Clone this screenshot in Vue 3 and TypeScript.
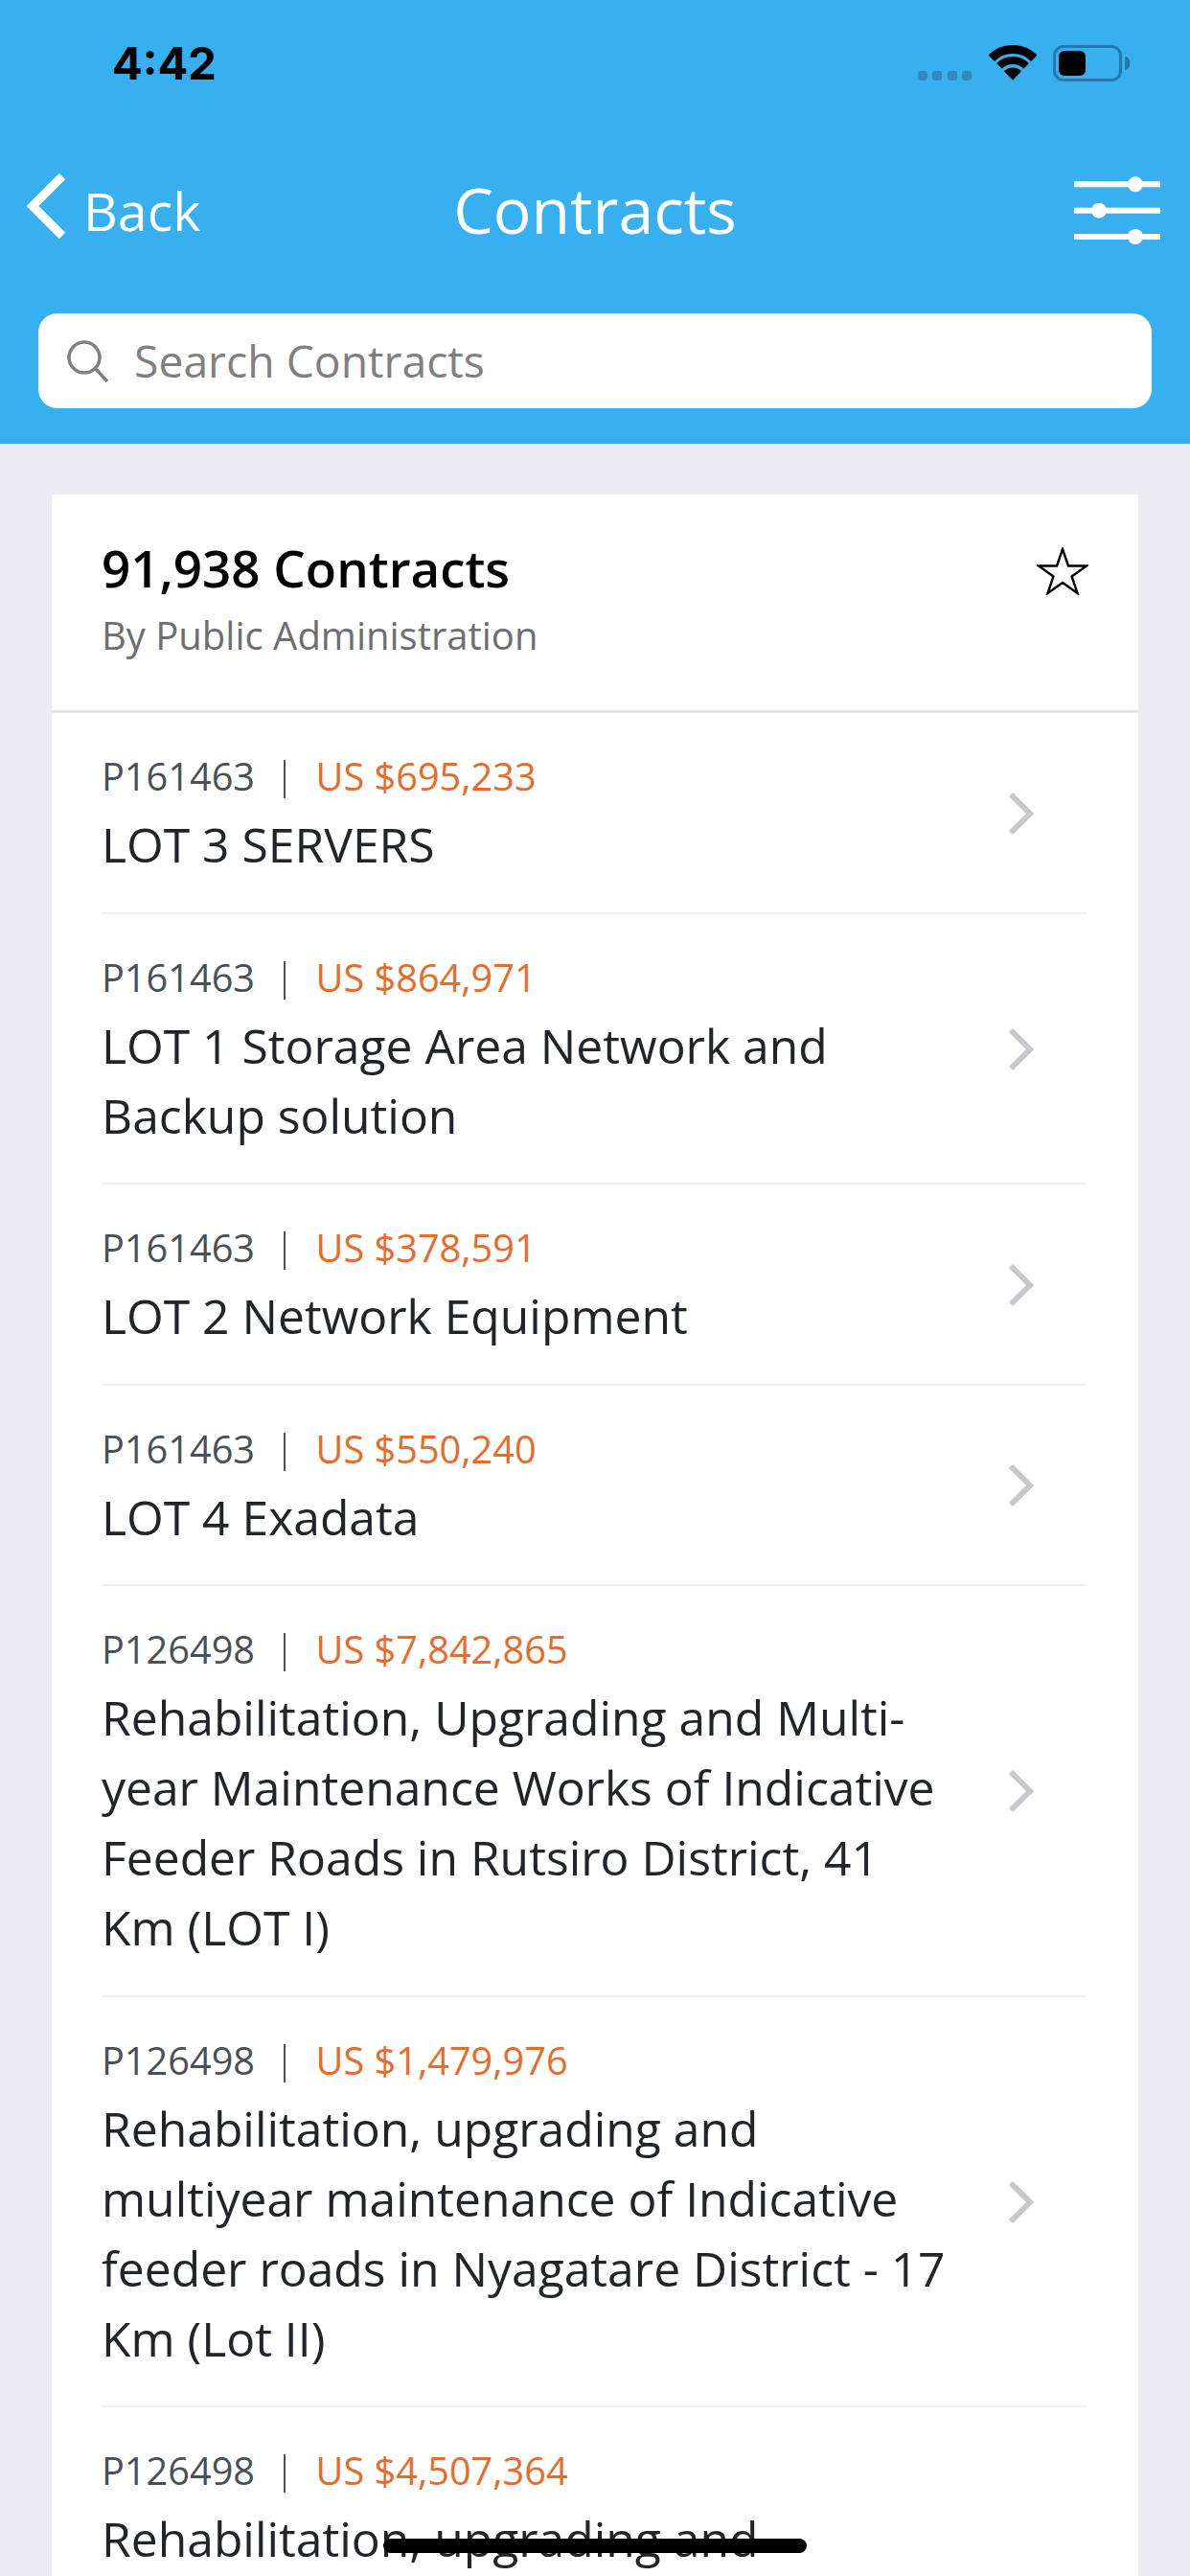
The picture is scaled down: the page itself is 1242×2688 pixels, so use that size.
<template>
  <div class="screen">
    <header class="top">
      <div class="status">
        <span class="time">4:42</span>
        <div class="status-icons">
          <div class="signal">
            <span v-for="n in 4" :key="n" class="signal-dot"></span>
          </div>
          <svg class="wifi" width="50" height="37" viewBox="0 0 50 37">
            <path d="M2.7 13.7A31.5 31.5 0 0 1 47.3 13.7" fill="none" stroke="#000" stroke-width="9" />
            <path d="M10.9 21.9A20 20 0 0 1 39.1 21.9" fill="none" stroke="#000" stroke-width="8" />
            <path d="M25 36.5L15.8 27.3A13 13 0 0 1 34.2 27.3Z" fill="#000" />
          </svg>
          <div class="battery">
            <span class="battery-fill"></span>
          </div>
          <span class="battery-cap"></span>
        </div>
      </div>

      <nav class="nav">
        <div class="back">
          <svg class="back-icon" width="50" height="80" viewBox="0 0 50 80">
            <path d="M39 9L8 40L39 71" fill="none" stroke="#fff" stroke-width="9" />
          </svg>
          <span>Back</span>
        </div>
        <div class="nav-title">Contracts</div>
        <svg class="sliders" width="90" height="72" viewBox="0 0 90 72">
          <g fill="#fff">
            <rect x="0" y="6.3" width="90" height="6" />
            <rect x="0" y="33.7" width="90" height="6" />
            <rect x="0" y="61" width="90" height="6" />
            <circle cx="64" cy="9.3" r="8" />
            <circle cx="26" cy="36.7" r="8" />
            <circle cx="64" cy="64" r="8" />
          </g>
        </svg>
      </nav>

      <div class="search">
        <svg width="46" height="46" viewBox="0 0 46 46">
          <circle cx="19" cy="19" r="16" fill="none" stroke="#808080" stroke-width="3.5" />
          <path d="M30 30L43 44" fill="none" stroke="#808080" stroke-width="3.5" />
        </svg>
        <span>Search Contracts</span>
      </div>
    </header>

    <main class="card">
      <div class="card-head">
        <div>
          <div class="count">91,938 Contracts</div>
          <div class="by">By Public Administration</div>
        </div>
        <svg class="star" width="54" height="50" viewBox="0 0 54 50">
          <path
            d="M27 2L33 19.5L52 19.5L36.6 30.5L42.5 48L27 37L11.5 48L17.4 30.5L2 19.5L21 19.5Z"
            fill="none"
            stroke="#000"
            stroke-width="2.4"
            stroke-linejoin="miter"
          />
        </svg>
      </div>

      <div v-for="c in contracts" :key="c.price" class="row">
        <div class="row-text">
          <div class="meta">
            <span class="pid">{{ c.id }}</span>
            <span class="sep"></span>
            <span class="price">{{ c.price }}</span>
          </div>
          <div class="title">{{ c.title }}</div>
        </div>
        <svg class="chevron" width="30" height="48" viewBox="0 0 30 48">
          <path d="M4 4L24 24L4 44" fill="none" stroke="#c8c8cc" stroke-width="6" />
        </svg>
      </div>
    </main>

    <div class="home-bar"></div>
  </div>
</template>

<script setup lang="ts">
interface Contract {
  id: string
  price: string
  title: string
}

const contracts: Contract[] = [
  { id: 'P161463', price: 'US $695,233', title: 'LOT 3 SERVERS' },
  { id: 'P161463', price: 'US $864,971', title: 'LOT 1 Storage Area Network and Backup solution' },
  { id: 'P161463', price: 'US $378,591', title: 'LOT 2 Network Equipment' },
  { id: 'P161463', price: 'US $550,240', title: 'LOT 4 Exadata' },
  {
    id: 'P126498',
    price: 'US $7,842,865',
    title: 'Rehabilitation, Upgrading and Multi-year Maintenance Works of Indicative Feeder Roads in Rutsiro District, 41 Km (LOT I)'
  },
  {
    id: 'P126498',
    price: 'US $1,479,976',
    title: 'Rehabilitation, upgrading and multiyear maintenance of Indicative feeder roads in Nyagatare District - 17 Km (Lot II)'
  },
  {
    id: 'P126498',
    price: 'US $4,507,364',
    title: 'Rehabilitation, upgrading and multiyear maintenance of Indicative feeder roads in Gatsibo District - 20 Km (Lot III)'
  }
]
</script>

<style scoped>
.screen {
  position: relative;
  width: 1242px;
  height: 2688px;
  overflow: hidden;
  background: #ebebf1;
  font-family: "Open Sans", "Noto Sans", sans-serif;
}

.top {
  height: 463px;
  background: #38b0f0;
  box-sizing: border-box;
}

.status {
  height: 132px;
  display: flex;
  justify-content: space-between;
  padding: 0 63px 0 117px;
  box-sizing: border-box;
}

.time {
  margin-top: 36px;
  font-family: Inter, "Liberation Sans", sans-serif;
  font-size: 47px;
  line-height: 60px;
  font-weight: 700;
  color: #000;
}

.status-icons {
  display: flex;
  align-items: flex-start;
  padding-top: 47px;
}

.signal {
  display: flex;
  gap: 5.5px;
  margin: 27px 18px 0 0;
}

.signal-dot {
  width: 10px;
  height: 10px;
  border-radius: 3px;
  background: #3189bd;
}

.battery {
  width: 72px;
  height: 38px;
  margin-left: 17px;
  box-sizing: border-box;
  border: 3px solid #2a76a6;
  border-radius: 11px;
  padding: 3px;
}

.battery-fill {
  display: block;
  width: 28px;
  height: 26px;
  border-radius: 6px;
  background: #000;
}

.battery-cap {
  width: 5px;
  height: 14px;
  margin: 12px 0 0 3px;
  border-radius: 0 7px 7px 0;
  background: #2a76a6;
}

.nav {
  height: 174px;
  display: grid;
  grid-template-columns: 1fr auto 1fr;
  align-items: center;
  padding: 0 31px 0 26px;
}

.back {
  display: flex;
  align-items: center;
  gap: 11px;
  font-size: 55.5px;
  color: #fff;
}

.back-icon {
  margin-bottom: 8px;
}

.nav-title {
  margin: 0 0 3px 5px;
  font-size: 66px;
  line-height: 90px;
  color: #fff;
}

.sliders {
  justify-self: end;
}

.search {
  height: 99px;
  margin: 21px 40px 0;
  padding-left: 29px;
  display: flex;
  align-items: center;
  gap: 25px;
  background: #fff;
  border-radius: 20px;
  font-size: 46.3px;
  color: #808080;
}

.card {
  margin: 53px 54px 0;
  background: #fff;
}

.card-head {
  height: 225px;
  display: flex;
  justify-content: space-between;
  align-items: flex-start;
  padding: 0 52px;
  border-bottom: 3px solid #e4e5e7;
}

.count {
  margin-top: 39px;
  font-size: 52.9px;
  line-height: 74px;
  font-weight: 600;
  color: #000;
}

.by {
  margin-top: 8px;
  font-size: 40px;
  line-height: 52px;
  color: #6d6d72;
}

.star {
  margin-top: 55px;
}

.row {
  display: flex;
  justify-content: space-between;
  align-items: center;
  margin: 0 53px 0 52px;
  padding: 41px 0 33.5px;
  border-bottom: 2px solid #eeeff1;
}

.row-text {
  width: 890px;
}

.meta {
  display: flex;
  align-items: center;
  height: 50px;
  font-size: 39.7px;
}

.pid {
  color: #495057;
}

.sep {
  width: 2px;
  height: 40px;
  margin: 6px 32px 0 29.5px;
  background: #495057;
}

.price {
  color: #e66c2c;
}

.title {
  margin-top: 10px;
  font-size: 49.8px;
  line-height: 73px;
  color: #212529;
}

.chevron {
  margin: 0 54px 6px 0;
}

.home-bar {
  position: absolute;
  left: 400px;
  top: 2649px;
  width: 442px;
  height: 15px;
  border-radius: 8px;
  background: #000;
}
</style>
